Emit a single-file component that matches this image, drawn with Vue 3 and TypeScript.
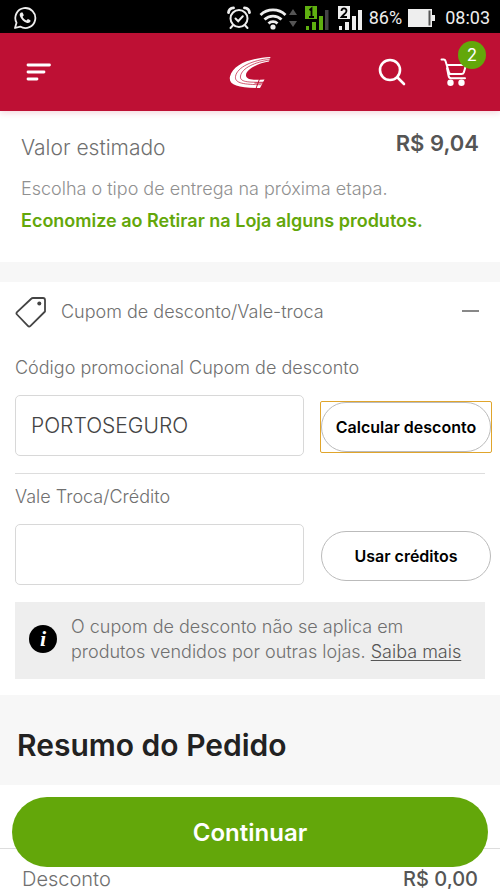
<script setup lang="ts">
import { ref } from 'vue'

interface SummaryRow {
  label: string
  value: string
}

const cartCount = ref<number>(2)
const coupon = ref<string>('PORTOSEGURO')
const credit = ref<string>('')
const expanded = ref<boolean>(true)
const rows: SummaryRow[] = [{ label: 'Desconto', value: 'R$ 0,00' }]
</script>

<template>
  <div class="page">
    <div class="status">
      <svg class="whats" width="24" height="24" viewBox="0 0 24 24" fill="none" stroke="#eee" stroke-width="1.8">
        <path d="M2 22l1.500-5.300A10 10 0 1 1 7.200 20.600z" stroke-linejoin="round" />
        <path d="M8 6.500c-1.200.8-1.700 2-1 3.700 1.200 3 3.500 5.300 6.500 6.500 1.800.7 3.300.2 4-1.400l-.1-1-2.500-1.300-1.500 1.400c-1.800-.8-3-2-3.800-3.700l1.200-1.500L9.600 6.500z" fill="#eee" stroke="none" />
      </svg>
      <div class="indicators">
        <svg width="24" height="24" viewBox="0 0 24 24" fill="none" stroke="#eee" stroke-width="2" stroke-linecap="round">
          <circle cx="12" cy="12.500" r="8.500" />
          <path d="M8.500 12.500l2.700 2.700 4.600-5M5.800 19.500L3.500 22M18.200 19.500l2.300 2.500" />
          <path d="M1.500 6.500C1.800 3.800 3.800 2 6.500 1.800M22.500 6.500c-.3-2.700-2.300-4.500-5-4.700" stroke-width="2.800" />
        </svg>
        <svg class="wifi" width="28" height="24" viewBox="0 0 28 24" fill="none" stroke="#eee" stroke-width="2.800">
          <path d="M1.500 9a18 18 0 0 1 25 0M5.500 13.500a12.200 12.200 0 0 1 17 0M9.500 17.500a6.500 6.500 0 0 1 9 0" />
          <circle cx="14" cy="21" r="2.600" fill="#eee" stroke="none" />
        </svg>
        <svg class="arrows" width="8" height="20" viewBox="0 0 8 20" fill="#555">
          <path d="M4 1l4 6H0zM4 19l4-6H0z" />
        </svg>
        <svg class="sim" width="25" height="24" viewBox="0 0 25 24">
          <rect width="12" height="13" fill="#5fb010" />
          <path d="M4.500 4.200L6.500 2.500v8.500M4 11h5" fill="none" stroke="#000" stroke-width="1.800" />
          <path d="M1 20h3v4H1zM7 16h4v8H7zM14 10h4v14h-4z" fill="#5fb010" />
          <path d="M20 4h3.500v20H20z" fill="#444" />
        </svg>
        <svg class="sim" width="25" height="24" viewBox="0 0 25 24">
          <rect width="12" height="13" fill="#eee" />
          <path d="M3.500 5c0-3.500 5-3.500 5 0 0 2-3 3.500-5 6H9" fill="none" stroke="#000" stroke-width="1.800" />
          <path d="M1 20h3v4H1zM7 16h4v8H7zM14 10h4v14h-4zM20 4h4v20h-4z" fill="#eee" />
        </svg>
        <span class="percent">86%</span>
        <svg class="battery" width="27" height="18" viewBox="0 0 27 18">
          <path d="M0 0h24v6h3v6h-3v6H0z" fill="#eee" />
          <path d="M20.500 1.500h2v15h-2z" fill="#555" />
        </svg>
        <time class="clock">08:03</time>
      </div>
    </div>

    <header class="bar">
      <button class="icon-btn menu" type="button" aria-label="Menu">
        <svg width="26" height="18" viewBox="0 0 26 18" fill="none" stroke="#fff" stroke-width="2.800" stroke-linecap="round">
          <path d="M3 2h21.500M3 9h16M3 16h9" />
        </svg>
      </button>
      <a class="logo" href="#" aria-label="Início">
        <svg width="42" height="33" viewBox="0 0 42 33">
          <path d="M41.500 1C22 2 4 8 1 20.500c-2 9 8 11.500 30 11.500l4.500-8.500C26 24 17.500 24.500 17 19.500 16.500 13 30 7 40 5.500z" fill="#fff" />
          <g fill="none" stroke="#be1034" stroke-width="0.700">
            <path d="M41 2.500C24 4 8 11 6.500 20.500c-1 7 9 8 26 8.200" />
            <path d="M41 4C26 6 13 12 11.500 20c-1 6 7 6.500 23.500 6.200" />
            <path d="M30.500 23l-3.500 9.500M25.500 27h9" stroke-width="1" />
          </g>
        </svg>
      </a>
      <div class="actions">
        <button class="icon-btn" type="button" aria-label="Buscar">
          <svg width="28" height="28" viewBox="0 0 28 28" fill="none" stroke="#fff" stroke-width="2.600" stroke-linecap="round">
            <circle cx="12" cy="12" r="10" />
            <path d="M19.500 19.500L26 26" />
          </svg>
        </button>
        <button class="icon-btn cart" type="button" aria-label="Carrinho">
          <svg width="28" height="28" viewBox="0 0 28 28" fill="none" stroke="#fff" stroke-width="2" stroke-linecap="round" stroke-linejoin="round">
            <path d="M1.500 1.500h2.200c1 0 1.500.5 1.800 1.500L9 14.500c.3 1 1 1.500 2 1.500h10.500c1.300 0 2-.6 2.400-1.700L26 7H7M7 10l1.500 7.500c.3 1.800 1.200 2.700 2.700 2.700H25" />
            <circle cx="10.500" cy="24.800" r="3.200" fill="#fff" stroke="none" />
            <circle cx="21.500" cy="24.800" r="3.200" fill="#fff" stroke="none" />
          </svg>
          <span class="badge">{{ cartCount }}</span>
        </button>
      </div>
    </header>

    <main>
      <section class="estimate">
        <div class="estimate-row">
          <span class="estimate-label">Valor estimado</span>
          <strong class="estimate-value">R$ 9,04</strong>
        </div>
        <p class="hint">Escolha o tipo de entrega na próxima etapa.</p>
        <p class="save">Economize ao Retirar na Loja alguns produtos.</p>
      </section>

      <section class="coupon">
        <button class="toggle" type="button" :aria-expanded="expanded" @click="expanded = !expanded">
          <svg width="32" height="32" viewBox="0 0 32 32" fill="none" stroke="#444" stroke-width="1.800" stroke-linejoin="round">
            <path d="M16.500 2.500Q17 2 18 2H28c1.300 0 2 .7 2 2v11.500L15.500 29.800c-1 .9-1.800.9-2.600 0L2 18.500c-.8-.9-.8-1.600 0-2.400z" />
            <circle cx="24.300" cy="7.500" r="2" fill="#444" stroke="none" />
          </svg>
          <span class="toggle-text">Cupom de desconto/Vale-troca</span>
          <span class="minus"></span>
        </button>

        <div v-if="expanded" class="forms">
          <form class="field first" @submit.prevent>
            <label for="coupon">Código promocional Cupom de desconto</label>
            <div class="field-row">
              <input id="coupon" v-model="coupon" type="text" />
              <div class="pill-box focused">
                <button class="pill" type="submit">Calcular desconto</button>
              </div>
            </div>
          </form>
          <form class="field" @submit.prevent>
            <label for="credit">Vale Troca/Crédito</label>
            <div class="field-row">
              <input id="credit" v-model="credit" type="text" />
              <div class="pill-box">
                <button class="pill" type="submit">Usar créditos</button>
              </div>
            </div>
          </form>
          <div class="notice">
            <span class="info">i</span>
            <p>O cupom de desconto não se aplica em produtos vendidos por outras lojas. <a href="#">Saiba mais</a></p>
          </div>
        </div>
      </section>

      <h2 class="summary-title">Resumo do Pedido</h2>
      <dl class="summary">
        <div v-for="row in rows" :key="row.label" class="summary-row">
          <dt>{{ row.label }}</dt>
          <dd>{{ row.value }}</dd>
        </div>
      </dl>
    </main>

    <button class="continue" type="button">Continuar</button>
  </div>
</template>

<style>
body {
  background: #fff;
}
</style>

<style scoped>
.page {
  font-family: Inter, "Open Sans", sans-serif;
  font-weight: 300;
  color: #707070;
}
.page * {
  box-sizing: border-box;
}
button,
input {
  font-family: inherit;
}
p,
h2,
dl,
dd {
  margin: 0;
}
svg {
  display: block;
  flex: none;
}
.status {
  display: flex;
  align-items: center;
  justify-content: space-between;
  height: 33px;
  padding: 2px 10px 0 13px;
  background: #000;
  color: #eee;
  font-family: Roboto, sans-serif;
  font-weight: 400;
  font-size: 18px;
}
.indicators {
  display: flex;
  align-items: center;
}
.wifi {
  margin-left: 8px;
}
.arrows {
  margin-left: 2px;
}
.sim {
  margin-left: 8px;
}
.percent {
  margin-left: 6px;
}
.battery {
  margin-left: 6px;
}
.clock {
  margin-left: 10px;
}
.bar {
  display: grid;
  grid-template-columns: 1fr auto 1fr;
  align-items: center;
  height: 78px;
  padding: 0 25px;
  background: #be1034;
  box-shadow: 0 2px 6px rgba(190, 16, 52, 0.16);
}
.icon-btn {
  padding: 0;
  border: 0;
  background: none;
}
.menu {
  justify-self: start;
}
.actions {
  display: flex;
  justify-self: end;
  gap: 34px;
  padding-right: 7px;
}
.cart {
  position: relative;
}
.badge {
  position: absolute;
  top: -17px;
  right: -18px;
  width: 28px;
  border-radius: 50%;
  background: #63a70a;
  color: #fff;
  font-size: 17px;
  font-weight: 400;
  line-height: 28px;
}
.estimate {
  padding: 16px 21px 25px;
}
.estimate-row {
  display: flex;
  justify-content: space-between;
}
.estimate-label {
  padding-top: 8px;
  font-size: 21px;
  line-height: 26px;
}
.estimate-value {
  font-size: 22px;
  font-weight: 600;
  line-height: 32px;
  color: #555;
}
.hint {
  margin-top: 12px;
  font-size: 18px;
  line-height: 32px;
  color: #909090;
}
.save {
  font-size: 18px;
  font-weight: 600;
  line-height: 32px;
  color: #63a70a;
}
.coupon {
  padding: 14px 15px 16px;
  border-top: 20px solid #f7f7f7;
}
.toggle {
  display: flex;
  align-items: center;
  width: 100%;
  padding: 0 6px 0 0;
  border: 0;
  background: none;
  color: #707070;
  font-size: 18px;
  font-weight: 300;
  text-align: left;
}
.toggle-text {
  flex: 1;
  padding-left: 14px;
  line-height: 32px;
}
.minus {
  width: 17px;
  height: 2px;
  margin-bottom: 2px;
  background: #888;
}
.forms {
  padding-top: 28px;
}
.field label {
  display: block;
  font-size: 18px;
  line-height: 24px;
}
.first {
  padding-bottom: 17px;
  margin-bottom: 11px;
  border-bottom: 1px solid #ddd;
}
.field-row {
  display: flex;
  align-items: center;
  gap: 16px;
  margin: 15px -7px 0 0;
}
.field-row input {
  flex: 1;
  min-width: 0;
  height: 61px;
  padding: 0 15px;
  border: 1px solid #d8d8d8;
  border-radius: 5px;
  background: #fff;
  color: #444;
  font-size: 21px;
  font-weight: 300;
}
.pill-box {
  width: 172px;
  margin-top: 2px;
  border: 1px solid transparent;
  border-radius: 2px;
}
.pill {
  display: block;
  width: 100%;
  height: 50px;
  padding: 0;
  border: 1px solid #bbb;
  border-radius: 25px;
  outline: none;
  background: #fff;
  color: #000;
  font-size: 16px;
  font-weight: 600;
}
.focused {
  border-color: #e0a52c;
}
.notice {
  display: flex;
  align-items: center;
  gap: 14px;
  margin-top: 17px;
  padding: 12px 14px 15px;
  background: #eee;
}
.notice p {
  font-size: 18px;
  line-height: 25px;
}
.notice a {
  color: #555;
  text-underline-offset: 2px;
}
.info {
  flex: none;
  width: 28px;
  border-radius: 50%;
  background: #000;
  color: #fff;
  font-family: "Liberation Serif", serif;
  font-size: 22px;
  font-style: italic;
  font-weight: 700;
  line-height: 28px;
  text-align: center;
}
.summary-title {
  padding: 32px 17px 22px;
  background: #f7f7f7;
  color: #222;
  font-size: 30px;
  font-weight: 600;
  line-height: 36px;
}
.summary {
  padding-top: 63px;
}
.summary-row {
  display: flex;
  justify-content: space-between;
  padding: 20px 22px 0;
  border-top: 1px solid #ddd;
  font-size: 20px;
  line-height: 20px;
}
.summary-row dd {
  color: #555;
  font-weight: 500;
}
.continue {
  position: fixed;
  right: 12px;
  bottom: 22px;
  left: 12px;
  height: 70px;
  border: 0;
  border-radius: 35px;
  background: #63a70a;
  color: #fff;
  font-size: 24px;
  font-weight: 600;
}
</style>
